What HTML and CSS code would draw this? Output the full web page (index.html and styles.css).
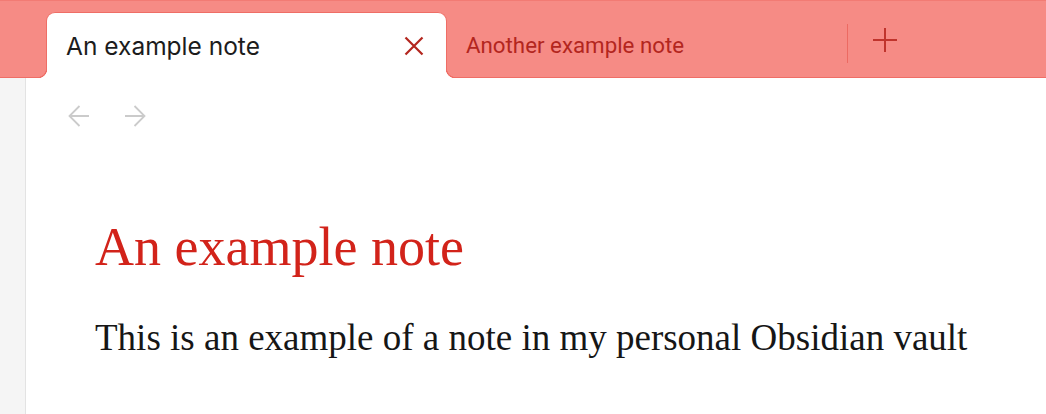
FILE: index.html
```html
<!DOCTYPE html>
<html lang="en">
<head>
<meta charset="utf-8">
<title>An example note</title>
<link rel="stylesheet" href="styles.css">
</head>
<body>
<div class="app">
  <div class="tabbar">
    <div class="tab tab-active">
      <span class="tab-title">An example note</span>
      <svg class="tab-close" width="20" height="20" viewBox="0 0 20 20" aria-hidden="true">
        <path d="M1.5 1.5L18.5 18.5M18.5 1.5L1.5 18.5" fill="none" stroke="currentColor" stroke-width="2.2" stroke-linecap="butt"/>
      </svg>
    </div>
    <div class="tab tab-inactive">
      <span class="tab-title">Another example note</span>
    </div>
    <div class="tab-divider"></div>
    <div class="new-tab">
      <svg width="24" height="24" viewBox="0 0 24 24" aria-hidden="true">
        <path d="M12 0V24M0 12H24" fill="none" stroke="currentColor" stroke-width="2"/>
      </svg>
    </div>
  </div>
  <div class="main">
    <div class="sidebar"></div>
    <div class="content">
      <div class="nav">
        <svg class="nav-btn" width="22" height="22" viewBox="0 0 22 22" aria-hidden="true">
          <path d="M21 11H1.5M11.5 1L1.5 11L11.5 21" fill="none" stroke="currentColor" stroke-width="1.8"/>
        </svg>
        <svg class="nav-btn" width="22" height="22" viewBox="0 0 22 22" aria-hidden="true">
          <path d="M1 11H20.5M10.5 1L20.5 11L10.5 21" fill="none" stroke="currentColor" stroke-width="1.8"/>
        </svg>
      </div>
      <div class="note">
        <h1 class="note-title">An example note</h1>
        <p class="note-body">This is an example of a note in my personal Obsidian vault</p>
      </div>
    </div>
  </div>
</div>
</body>
</html>
```
FILE: styles.css
```css
* { box-sizing: border-box; }
html, body { margin: 0; padding: 0; background: #ffffff; }
body { font-family: Inter, "Noto Sans", sans-serif; }

.app {
  width: 1046px;
  height: 414px;
  display: flex;
  flex-direction: column;
  overflow: hidden;
}

.tabbar {
  height: 78px;
  flex: none;
  background: #f68b85;
  border-top: 1px solid #f27b74;
  border-bottom: 1px solid #ef6e66;
  padding: 11px 0 0 46px;
  display: flex;
  align-items: stretch;
}

.tab {
  width: 401px;
  display: flex;
  align-items: center;
  white-space: nowrap;
}

.tab-active {
  position: relative;
  z-index: 1;
  background: #ffffff;
  border: 1px solid #ef6e66;
  border-bottom: none;
  border-radius: 9px 9px 0 0;
  margin-bottom: -1px;
  padding: 0 22px 0 19px;
  justify-content: space-between;
  color: #1c1c1c;
  font-family: Inter, sans-serif;
  font-size: 24.5px;
}

.tab-active::before,
.tab-active::after {
  content: "";
  position: absolute;
  bottom: 0;
  width: 9px;
  height: 9px;
}
.tab-active::before {
  left: -9px;
  background: radial-gradient(circle at 0 0, #f68b85 7.6px, #ef6e66 8.1px, #ef6e66 8.9px, #ffffff 9.4px);
}
.tab-active::after {
  right: -9px;
  background: radial-gradient(circle at 100% 0, #f68b85 7.6px, #ef6e66 8.1px, #ef6e66 8.9px, #ffffff 9.4px);
}

.tab-close { color: #b3261e; flex: none; }

.tab-inactive {
  width: 400px;
  padding-left: 19px;
  color: #b3261e;
  font-family: Roboto, sans-serif;
  font-size: 22.3px;
}

.tab-divider {
  width: 1px;
  height: 39px;
  align-self: center;
  margin-bottom: 2px;
  background: #ec6a62;
}

.new-tab {
  margin-left: 25px;
  align-self: center;
  margin-bottom: 9px;
  display: flex;
  color: #c0342c;
}

.main {
  flex: 1;
  display: flex;
}

.sidebar {
  width: 26px;
  flex: none;
  background: #f5f5f5;
  border-right: 1px solid #e3e3e3;
}

.content { flex: 1; }

.nav {
  display: flex;
  gap: 34px;
  padding: 27px 0 0 42px;
  height: 49px;
  color: #cbcbcb;
}

.note { padding-left: 69px; }

.note-title {
  margin: 88px 0 0;
  font-family: "Liberation Serif", serif;
  font-weight: normal;
  font-size: 54px;
  line-height: 64px;
  color: #d2231a;
}

.note-body {
  margin: 33px 0 0;
  font-family: "Liberation Serif", serif;
  font-size: 37px;
  line-height: 52px;
  color: #161616;
}
```
